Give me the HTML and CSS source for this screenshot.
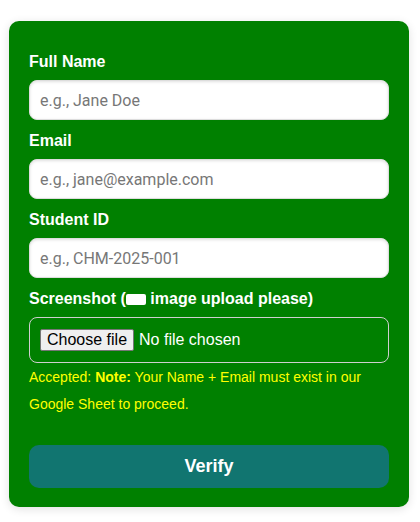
FILE: index.html
```html
<!DOCTYPE html>
<html>
<head>
<meta charset="utf-8">
<link rel="stylesheet" href="styles.css">
</head>
<body>
<div class="card">
  <form class="form">
    <div class="field">
      <label class="label">Full Name</label>
      <input class="text-input" type="text" placeholder="e.g., Jane Doe">
    </div>
    <div class="field">
      <label class="label">Email</label>
      <input class="text-input" type="email" placeholder="e.g., jane@example.com">
    </div>
    <div class="field">
      <label class="label">Student ID</label>
      <input class="text-input" type="text" placeholder="e.g., CHM-2025-001">
    </div>
    <div class="field">
      <label class="label">Screenshot (<span class="emoji"></span> image upload please)</label>
      <label class="file-box">
        <input class="file-hidden" type="file">
        <span class="file-btn">Choose file</span>
        <span class="file-name">No file chosen</span>
      </label>
      <p class="note">Accepted: <b>Note:</b> Your Name + Email must exist in our Google Sheet to proceed.</p>
    </div>
    <button class="verify" type="button">Verify</button>
  </form>
</div>
</body>
</html>
```
FILE: styles.css
```css
html, body {
  margin: 0;
  padding: 0;
  background: #ffffff;
}
body {
  padding: 21px 11px 14px 9px;
  font-family: "Liberation Sans", Arial, sans-serif;
}
.card {
  width: 400px;
  box-sizing: border-box;
  background: #008000;
  border-radius: 10px;
  padding: 32px 20px 19px 20px;
  box-shadow: 0 2px 10px rgba(0,0,0,0.12);
}
.form {
  display: flex;
  flex-direction: column;
}
.field {
  display: flex;
  flex-direction: column;
  margin-bottom: 12px;
}
.label {
  color: #ffffff;
  font-weight: bold;
  font-size: 16px;
  line-height: 18px;
  margin-bottom: 9px;
}
.emoji {
  display: inline-block;
  width: 20px;
  height: 11px;
  background: #ffffff;
  border-radius: 2px;
  vertical-align: -1px;
}
.text-input {
  height: 40px;
  box-sizing: border-box;
  border: 1px solid #dddddd;
  border-radius: 8px;
  padding: 0 10px;
  font-family: Roboto, sans-serif;
  font-size: 16px;
  color: #222;
  background: #fff;
  box-shadow: inset 0 1px 3px rgba(0,0,0,0.12);
  outline: none;
}
.text-input::placeholder {
  color: #777777;
}
.file-box {
  height: 46px;
  box-sizing: border-box;
  border: 1px solid #cfcfcf;
  border-radius: 8px;
  padding: 0 10px;
  display: flex;
  align-items: center;
  gap: 5px;
  font-size: 16px;
}
.file-hidden {
  display: none;
}
.file-btn {
  background: #efefef;
  border: 1px solid #767676;
  border-radius: 2px;
  color: #000000;
  padding: 1px 6px;
  line-height: 18px;
}
.file-name {
  color: #ffffff;
}
.note {
  margin: 0;
  padding-top: 1px;
  color: #ffff00;
  font-size: 14px;
  line-height: 27px;
}
.note b {
  font-weight: bold;
}
.verify {
  margin-top: 15px;
  height: 43px;
  border: none;
  border-radius: 10px;
  background: #117570;
  color: #ffffff;
  font-family: "Liberation Sans", Arial, sans-serif;
  font-weight: bold;
  font-size: 18px;
}
```
